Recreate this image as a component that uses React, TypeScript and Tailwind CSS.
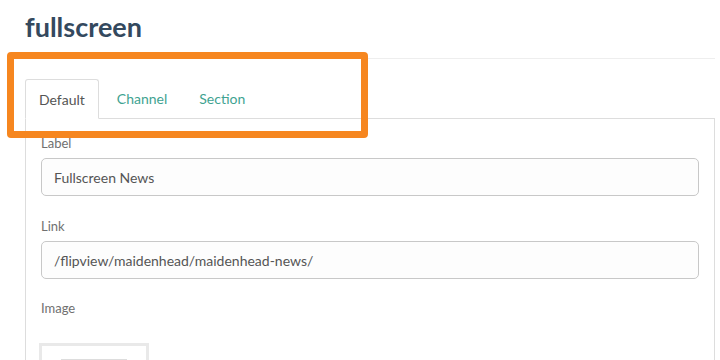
import React from "react";

const FONT = { fontFamily: "Lato, 'Open Sans', Arial, sans-serif" };

function Field({ label, value, first }: { label: string; value: string; first?: boolean }) {
  return (
    <div className={first ? "pt-[14px]" : "mt-[20px]"}>
      <div className="text-[13px] leading-[20px] text-[#707070] mb-[5px]">{label}</div>
      <div className="h-[38px] rounded-[5px] border-[1.5px] border-[#c8c8c8] bg-[#fdfdfd] flex items-center pl-[12px] text-[14px] text-[#555]">
        {value}
      </div>
    </div>
  );
}

export default function App() {
  return (
    <div className="relative w-[720px] h-[360px] overflow-hidden bg-white" style={FONT}>
      {/* Title */}
      <h1 className="pl-[25px] pt-[11px] text-[27px] leading-[32px] font-bold text-[#34495e]">
        fullscreen
      </h1>
      <div className="ml-[14px] mr-[5px] h-[16px] border-b border-[#eee]" />

      {/* Tabs */}
      <div className="mt-[20px] ml-[25px] mr-[5px] flex border-b border-[#ddd] text-[14px]">
        <div className="-mb-px h-[40px] flex items-center px-[13px] border border-[#ddd] border-b-white bg-white rounded-t-[3px] text-[#555]">
          Default
        </div>
        <div className="ml-[4px] h-[39px] flex items-center px-[14px] text-[#3fa391]">Channel</div>
        <div className="ml-[4px] h-[39px] flex items-center px-[14px] text-[#3fa391]">Section</div>
      </div>

      {/* Panel */}
      <div className="ml-[25px] mr-[5px] h-[260px] border-l border-r border-[#ddd] pl-[15px] pr-[15px]">
        <Field first label="Label" value="Fullscreen News" />
        <Field label="Link" value="/flipview/maidenhead/maidenhead-news/" />
        <div className="mt-[19px] text-[13px] leading-[20px] text-[#707070]">Image</div>
        <div className="mt-[25px] -ml-[2px] w-[110px] h-[100px] border-[3px] border-[#e9e9e9] pt-[13px] px-[19px]">
          <div className="h-[60px] border-t border-[#ddd]" />
        </div>
      </div>

      {/* Highlight */}
      <div className="absolute left-[7px] top-[52px] w-[361px] h-[86px] border-[7px] border-[#f6861f] rounded-[4px]" />
    </div>
  );
}
